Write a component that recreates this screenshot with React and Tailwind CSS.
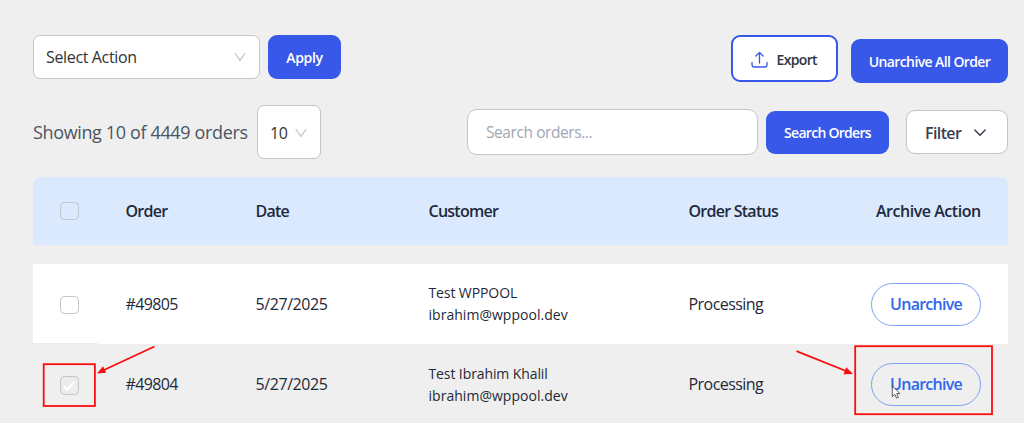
import React from "react";

const cols = "grid grid-cols-[92.5px_130px_173px_260px_182.5px_1fr] items-center";

function ThinChevron({ className }) {
  return (
    <svg className={className} width="12" height="10" viewBox="0 0 12 10" fill="none" stroke="#c4c4c6" strokeWidth="1.2">
      <path d="M.7 1 6 8.4 11.3 1" />
    </svg>
  );
}

function Checkbox({ checked, className = "" }) {
  return (
    <span className={`ml-[27px] flex h-[18.5px] w-[18.5px] items-center justify-center rounded-[4.5px] border border-[#c0c5ce] ${checked ? "bg-[#ececec]" : ""} ${className}`}>
      {checked && (
        <svg width="14" height="14" viewBox="0 0 14 14" fill="none" stroke="#fff" strokeWidth="2.4">
          <path d="M1.8 7.4 5.3 11 12.2 2.8" />
        </svg>
      )}
    </span>
  );
}

function Row({ id, name, checked, className }) {
  return (
    <div className={`${cols} text-[16px] text-[#1f2937] ${className}`}>
      <Checkbox checked={checked} className={checked ? "mt-[3px]" : "mt-[2px]"} />
      <span className="tracking-[-0.65px]">{id}</span>
      <span className="tracking-[-0.42px]">5/27/2025</span>
      <span className={`text-[14px] leading-[22px] ${checked ? "pt-[2px]" : ""}`}>
        <span className="tracking-[-0.1px]">{name}</span>
        <br />
        <span className="tracking-[0.03px]">ibrahim@wppool.dev</span>
      </span>
      <span className="tracking-[-0.55px]">Processing</span>
      <button className="h-[43px] w-[110px] rounded-full border border-[#7ea1f5] font-semibold text-[#2f66ee] tracking-[-0.75px]">
        Unarchive
      </button>
    </div>
  );
}

export default function App() {
  return (
    <div className="relative h-[423px] w-[1024px] overflow-hidden bg-[#efefef] font-['Open_Sans','Noto_Sans',sans-serif]">
      <div className="ml-[33px] w-[975px]">
        <div className="flex items-start pt-[35px]">
          <div className="flex h-[44px] w-[227px] items-center justify-between rounded-[7px] border border-[#c2c4cf] bg-white pr-[13px] pl-[12px] text-[16px] text-[#333]">
            <span className="tracking-[-0.35px]">Select Action</span>
            <ThinChevron />
          </div>
          <button className="ml-[8px] h-[44px] w-[73px] rounded-[9px] bg-[#3858e9] text-[14px] font-semibold tracking-[-0.3px] text-white">Apply</button>
          <button className="ml-auto flex h-[47px] w-[107px] items-center rounded-[9px] border-2 border-[#3858e9] bg-white pt-px pl-[18px] text-[14px] font-semibold text-[#2c3545]">
            <svg className="mr-[8.5px]" width="17" height="17" viewBox="0 0 17 17" fill="none" stroke="#3858e9" strokeWidth="1.3" strokeLinecap="round" strokeLinejoin="round">
              <path d="M8.5 12V1.4M4.9 5 8.5 1.4 12.1 5M1 11.3v2.5Q1 16 3.2 16h10.6q2.2 0 2.2-2.2v-2.5" />
            </svg>
            <span className="tracking-[-0.65px]">Export</span>
          </button>
          <button className="mt-[4px] ml-[13px] h-[44px] w-[157px] rounded-[9px] bg-[#3858e9] pt-px text-[14px] font-semibold tracking-[-0.6px] text-white">Unarchive All Order</button>
        </div>

        <div className="mt-[22px] flex h-[54px] items-center">
          <span className="w-[224px] text-[18px] tracking-[-0.36px] text-[#4b5563]">Showing 10 of 4449 orders</span>
          <div className="flex h-[54px] w-[64px] items-center justify-between rounded-[7px] border border-[#c2c4cf] bg-white pt-px pr-[13px] pl-[12px] text-[16px] tracking-[-0.3px] text-[#333]">
            10
            <ThinChevron />
          </div>
          <div className="ml-auto flex h-[46px] w-[291px] items-center rounded-[10px] border border-[#c2c4cf] bg-white pt-[2px] pl-[18px] text-[15.5px] tracking-[-0.42px] text-[#a0a7b4]">Search orders...</div>
          <button className="ml-[8px] h-[43px] w-[123px] rounded-[9px] bg-[#3858e9] text-[14px] font-semibold tracking-[-0.72px] text-white">Search Orders</button>
          <button className="ml-[17px] flex h-[44px] w-[102px] items-center rounded-[9px] border border-[#c2c4cf] bg-white pt-px pl-[18px] text-[16px] font-semibold text-[#374151]">
            <span className="tracking-[-0.6px]">Filter</span>
            <svg className="ml-[13px]" width="12" height="8" viewBox="0 0 12 8" fill="none" stroke="#3d4654" strokeWidth="1.6" strokeLinecap="round" strokeLinejoin="round">
              <path d="M.9 1 6 6.3 11.1 1" />
            </svg>
          </button>
        </div>

        <div className={`${cols} mt-[18px] h-[68px] rounded-t-[8px] bg-[#dbe9fe] text-[16px] font-semibold tracking-[-0.75px] text-[#1e293b]`}>
          <Checkbox />
          <span>Order</span>
          <span>Date</span>
          <span>Customer</span>
          <span>Order Status</span>
          <span className="ml-[5px] tracking-[-0.47px]">Archive Action</span>
        </div>
        <Row id="#49805" name="Test WPPOOL" className="mt-[19px] h-[80px] bg-white" />
        <Row id="#49804" name="Test Ibrahim Khalil" checked className="h-[80px]" />
      </div>

      <svg className="pointer-events-none absolute inset-0" width="1024" height="423" fill="none">
        <path d="M33 343.5H98" stroke="#ececec" />
        <g stroke="#fc0d0d" strokeWidth="1.8">
          <rect x="43.7" y="364.2" width="51.2" height="41.8" />
          <rect x="855.2" y="346.2" width="136.8" height="68" />
          <path d="M154.5 346.5 104 370M796.5 351.2 846 371" />
        </g>
        <path d="M97 373.5 103 366.2 106.2 372.8ZM853 374 843.5 374.2 846.2 367.2Z" fill="#fc0d0d" />
        <path d="M892.3 386v10.6l2.5-2.3 1.8 3.8 1.8-.8-1.7-3.7h3.3Z" fill="#fff" stroke="#444b59" strokeWidth=".9" />
      </svg>
    </div>
  );
}
